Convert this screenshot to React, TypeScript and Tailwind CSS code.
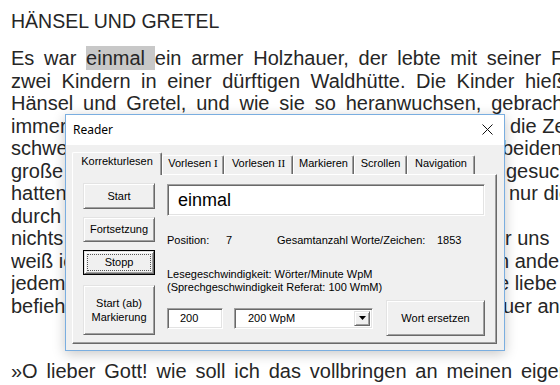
import React from "react";

type Row = { left: string; right?: string; w?: string };

const rows: Row[] = [
  { left: "immer mehr an Brot, und", right: "die Zeit wurde ihnen gar", w: "w-[499px]" },
  { left: "schwer, denn es fehlte an allem, und den", right: "beiden Kindern", w: "w-[491px]" },
  { left: "große Not; sie hatten lange nach Arbeit", right: "gesucht, doch", w: "w-[495px]" },
  { left: "hatten sie keine gefunden, und so blieb", right: "nur die Sorge", w: "w-[498px]" },
  { left: "durch den langen Winter zu kommen. Da sprach" },
  { left: "nichts mehr im Hause, was bleibt fü", right: "r uns", w: "w-[494px]" },
  { left: "weiß ich keinen Rat mehr, und auch kei", right: "n anderer", w: "w-[487px]" },
  { left: "jedem geht es schlecht, wir haben kein", right: "e liebe Not", w: "w-[487px]" },
  { left: "befiehlt, und wir gehen mit dem Fe", right: "uer an den", w: "w-[492px]" },
];

function DocLine({ row }: { row: Row }) {
  if (!row.right) return <div className="h-[22.5px]">{row.left}</div>;
  return (
    <div className="flex h-[22.5px]">
      <span className={`${row.w} shrink-0 overflow-hidden`}>{row.left}</span>
      <span>{row.right}</span>
    </div>
  );
}

const raised =
  "bg-[#f0f0f0] border border-t-[#e3e3e3] border-l-[#e3e3e3] border-r-[#696969] border-b-[#696969] shadow-[inset_1px_1px_0_#ffffff,inset_-1px_-1px_0_#a0a0a0]";
const sunken =
  "bg-white border border-t-[#a0a0a0] border-l-[#a0a0a0] border-r-white border-b-white shadow-[inset_1px_1px_0_#696969,inset_-1px_-1px_0_#e3e3e3]";

function Btn({ className, children }: { className: string; children: React.ReactNode }) {
  return (
    <div className={`${raised} ${className} flex items-center justify-center text-center`}>{children}</div>
  );
}

const tabs = [
  { label: "Vorlesen", roman: "I", w: "w-[62px]" },
  { label: "Vorlesen", roman: "II", w: "w-[69px]" },
  { label: "Markieren", w: "w-[61px]" },
  { label: "Scrollen", w: "w-[53px]" },
  { label: "Navigation", w: "w-[68px]" },
];

function Reader() {
  return (
    <div className="absolute left-[65px] top-[114px] w-[440px] h-[237px] border border-[#7aaee0] bg-[#f0f0f0] shadow-[0_3px_12px_rgba(0,0,0,0.22)] flex flex-col font-['Liberation_Sans',Arial,sans-serif] text-[11px] text-black">
      <div className="h-[30px] bg-white flex items-center justify-between pl-[7px] pr-[11px]">
        <span className="font-['Noto_Sans',sans-serif] text-[12px] leading-none">Reader</span>
        <svg width="11" height="11" viewBox="0 0 11 11" className="mt-[-1px]">
          <path d="M0.5 0.5 L10.5 10.5 M10.5 0.5 L0.5 10.5" stroke="#111" strokeWidth="1" fill="none" />
        </svg>
      </div>
      <div className="flex-1 flex flex-col pl-[6px] pr-[7px] pt-[7px] pb-[6px]">
        <div className="flex items-end h-[22px]">
          <div className="relative z-10 w-[90px] h-[23px] -mb-px bg-[#f0f0f0] border-t border-l border-r border-t-white border-l-white border-r-[#696969] shadow-[inset_-1px_0_0_#a0a0a0] rounded-t-[2px] flex justify-center pt-[2px] leading-[13px]">
            Korrekturlesen
          </div>
          {tabs.map((t, i) => (
            <div
              key={i}
              className={`${t.w} h-[19px] border-t border-l border-r border-t-white border-l-white border-r-[#696969] shadow-[inset_-1px_0_0_#a0a0a0] rounded-t-[2px] flex justify-center pt-[1px] leading-[13px]`}
            >
              <span>
                {t.label}
                {t.roman ? (
                  <>
                    {" "}
                    <span className="font-['Liberation_Serif',serif]">{t.roman}</span>
                  </>
                ) : null}
              </span>
            </div>
          ))}
        </div>
        <div className="flex-1 flex border border-t-white border-l-white border-r-[#696969] border-b-[#696969] shadow-[inset_-1px_-1px_0_#a0a0a0] pl-[10px] pr-[11px] pt-[8px]">
          <div className="w-[72px] shrink-0 flex flex-col">
            <Btn className="h-[26px]">Start</Btn>
            <Btn className="h-[25px] mt-[8px]">Fortsetzung</Btn>
            <div className="h-[25px] mt-[8px] border border-black">
              <Btn className="h-full w-full">
                <span className="flex items-center justify-center w-[64px] h-[17px] border border-dotted border-[#555]">Stopp</span>
              </Btn>
            </div>
            <Btn className="h-[50px] mt-[10px] leading-[14px]">
              <span>
                Start (ab)
                <br />
                Markierung
              </span>
            </Btn>
          </div>
          <div className="flex-1 ml-[12px] flex flex-col">
            <div className={`${sunken} h-[32px] mt-[1px] flex items-center pl-[10px] text-[18px] leading-none`}>einmal</div>
            <div className="flex mt-[18px] leading-[13px]">
              <span className="w-[59px]">Position:</span>
              <span className="w-[51px]">7</span>
              <span className="w-[160px]">Gesamtanzahl Worte/Zeichen:</span>
              <span>1853</span>
            </div>
            <div className="mt-[21px] leading-[13px]">
              <div>Lesegeschwindigkeit: Wörter/Minute WpM</div>
              <div>(Sprechgeschwindigkeit Referat: 100 WmM)</div>
            </div>
            <div className="flex items-center mt-[6px]">
              <div className={`${sunken} w-[56px] h-[21px] flex items-center pl-[12px]`}>200</div>
              <div className={`${sunken} ml-[11px] w-[139px] h-[21px] flex p-[2px]`}>
                <div className="flex-1 flex items-center pl-[11px]">200 WpM</div>
                <div className={`${raised} w-[16px] flex items-center justify-center`}>
                  <svg width="7" height="4" viewBox="0 0 7 4">
                    <path d="M0 0 H7 L3.5 4 Z" fill="#000" />
                  </svg>
                </div>
              </div>
              <Btn className="ml-[13px] w-[99px] h-[36px]">Wort ersetzen</Btn>
            </div>
          </div>
        </div>
      </div>
    </div>
  );
}

export default function App() {
  return (
    <div className="relative w-[560px] h-[385px] overflow-hidden bg-white">
      <div className="pl-[11px] pt-[10px] font-['Liberation_Sans',Arial,sans-serif] text-[20px] leading-[22.5px] text-[#262626] whitespace-nowrap">
        <div className="h-[22.5px] text-[19.5px]">HÄNSEL UND GRETEL</div>
        <div className="mt-[14.5px]">
          <div className="h-[22.5px] [word-spacing:4.2px]">
            Es war <span className="bg-[#c8c8c8] py-[1px]">einmal </span>ein armer Holzhauer, der lebte mit seiner Frau und
          </div>
          <div className="h-[22.5px] [word-spacing:5px]">zwei Kindern in einer dürftigen Waldhütte. Die Kinder hießen</div>
          <div className="h-[22.5px] [word-spacing:4.3px]">Hänsel und Gretel, und wie sie so heranwuchsen, gebrach es</div>
          {rows.map((r, i) => (
            <DocLine key={i} row={r} />
          ))}
        </div>
        <div className="mt-[43px] h-[22.5px] [word-spacing:3.3px]">
          »O lieber Gott! wie soll ich das vollbringen an meinen eigenen Kindern
        </div>
      </div>
      <Reader />
    </div>
  );
}
